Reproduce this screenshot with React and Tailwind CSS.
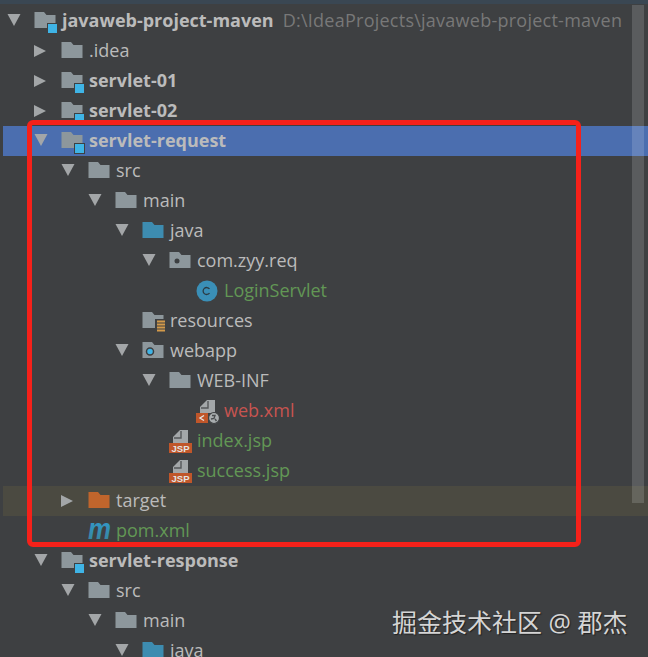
const indent = ['pl-[1px]', 'pl-[28px]', 'pl-[55px]', 'pl-[82px]', 'pl-[109px]', 'pl-[136px]', 'pl-[163px]']

const tones = {
  plain: 'text-[#bbbbbb]',
  green: 'text-[#629755]',
  red: 'text-[#c75450]',
}

const rows = [
  { depth: 0, arrow: 'down', icon: 'module', name: 'javaweb-project-maven', bold: true, hint: 'D:\\IdeaProjects\\javaweb-project-maven' },
  { depth: 1, arrow: 'right', icon: 'folder', name: '.idea' },
  { depth: 1, arrow: 'right', icon: 'module', name: 'servlet-01', bold: true },
  { depth: 1, arrow: 'right', icon: 'module', name: 'servlet-02', bold: true },
  { depth: 1, arrow: 'down', icon: 'module', name: 'servlet-request', bold: true, selected: true },
  { depth: 2, arrow: 'down', icon: 'folder', name: 'src' },
  { depth: 3, arrow: 'down', icon: 'folder', name: 'main' },
  { depth: 4, arrow: 'down', icon: 'source', name: 'java' },
  { depth: 5, arrow: 'down', icon: 'package', name: 'com.zyy.req' },
  { depth: 6, icon: 'class', name: 'LoginServlet', tone: 'green' },
  { depth: 4, icon: 'resources', name: 'resources' },
  { depth: 4, arrow: 'down', icon: 'web', name: 'webapp' },
  { depth: 5, arrow: 'down', icon: 'folder', name: 'WEB-INF' },
  { depth: 6, icon: 'xml', name: 'web.xml', tone: 'red' },
  { depth: 5, icon: 'jsp', name: 'index.jsp', tone: 'green' },
  { depth: 5, icon: 'jsp', name: 'success.jsp', tone: 'green' },
  { depth: 2, arrow: 'right', icon: 'target', name: 'target', excluded: true },
  { depth: 2, icon: 'maven', name: 'pom.xml', tone: 'green' },
  { depth: 1, arrow: 'down', icon: 'module', name: 'servlet-response', bold: true },
  { depth: 2, arrow: 'down', icon: 'folder', name: 'src' },
  { depth: 3, arrow: 'down', icon: 'folder', name: 'main' },
  { depth: 4, arrow: 'down', icon: 'source', name: 'java' },
]

function Arrow({ dir }) {
  return (
    <svg width="20" height="20" viewBox="0 0 20 20">
      {dir === 'down' ? <path d="M3.5 3h13L10 15z" fill="#a3a6a8" /> : <path d="M3 4l12 6-12 6z" fill="#a3a6a8" />}
    </svg>
  )
}

const folderPath = 'M0.5 2h9.5l2.5 3h9v13h-21z'

function Page() {
  return (
    <>
      <path d="M11 0h8v13H4V7z" fill="#a3a7a9" />
      <path d="M12 1v7H5" fill="none" stroke="#55585a" strokeWidth="1.4" />
    </>
  )
}

function Icon({ type }) {
  return (
    <svg width="24" height="22" viewBox="0 0 24 22" className="overflow-visible">
      {type === 'folder' && <path d={folderPath} fill="#8d979c" />}
      {type === 'source' && <path d={folderPath} fill="#3d8cb0" />}
      {type === 'target' && <path d={folderPath} fill="#c0652c" />}
      {type === 'module' && (
        <>
          <path d={folderPath} fill="#8d979c" />
          <rect x="13" y="13" width="11" height="11" fill="#3e4042" />
          <rect x="14" y="14" width="9" height="9" fill="#3fb4e6" />
        </>
      )}
      {type === 'package' && (
        <>
          <path d={folderPath} fill="#8d979c" />
          <circle cx="8" cy="11" r="2.5" fill="#3c3f41" />
        </>
      )}
      {type === 'web' && (
        <>
          <path d={folderPath} fill="#8d979c" />
          <circle cx="8" cy="11.5" r="3.5" fill="#3fb4e6" stroke="#3c3f41" strokeWidth="1.5" />
        </>
      )}
      {type === 'resources' && (
        <>
          <path d={folderPath} fill="#8d979c" />
          <rect x="13" y="9" width="11" height="15" fill="#3e4042" />
          <path d="M15 11.5h8M15 14.5h8M15 17.5h8M15 20.5h8" stroke="#d39a4a" strokeWidth="2" />
        </>
      )}
      {type === 'class' && (
        <>
          <circle cx="11" cy="11" r="10.5" fill="#3a8fb7" />
          <path d="M13.5 9a3.5 3.5 0 1 0 0 4" fill="none" stroke="#2b3a42" strokeWidth="1.3" />
        </>
      )}
      {type === 'jsp' && (
        <>
          <Page />
          <rect x="0" y="13" width="23" height="10" fill="#c0562a" />
          <text x="11.5" y="21.5" textAnchor="middle" fontSize="9.5" fontWeight="700" fill="#e4e4e4" className="font-['Liberation_Sans',sans-serif]">JSP</text>
        </>
      )}
      {type === 'xml' && (
        <>
          <Page />
          <rect x="0" y="13" width="12" height="10" fill="#c0562a" />
          <path d="M8 15.5l-4 2.5 4 2.5" fill="none" stroke="#e4e4e4" strokeWidth="1.4" />
          <circle cx="18" cy="18" r="5.5" fill="#a8acae" stroke="#3e4042" strokeWidth="1.2" />
          <path d="M16 15.5h3l-1 3-3 .5M19 19l1.5 2" fill="none" stroke="#4a4d4f" strokeWidth="1.4" />
        </>
      )}
      {type === 'maven' && (
        <>
          <defs>
            <linearGradient id="mavenFill" x1="0" y1="0" x2="0" y2="1">
              <stop offset="0" stopColor="#2f9fd8" />
              <stop offset="1" stopColor="#3a8296" />
            </linearGradient>
          </defs>
          <text x="0" y="19" fontSize="29" fontWeight="700" fontStyle="italic" fill="url(#mavenFill)" textLength="23" lengthAdjust="spacingAndGlyphs" className="font-['Liberation_Sans',sans-serif]">m</text>
        </>
      )}
    </svg>
  )
}

function Row({ row }) {
  const bg = row.selected ? 'bg-[#4b6eaf]' : row.excluded ? 'bg-[#4b4a41]' : ''
  return (
    <div className={`ml-[3px] flex h-[30px] items-center whitespace-nowrap ${indent[row.depth]} ${bg}`}>
      <div className="flex w-[30px] shrink-0 items-center">{row.arrow && <Arrow dir={row.arrow} />}</div>
      <div className="flex w-[28px] shrink-0 items-center"><Icon type={row.icon} /></div>
      <span className={`pb-[2px] ${tones[row.tone || 'plain']} ${row.bold ? 'font-bold' : ''}`}>{row.name}</span>
      {row.hint && <span className="ml-[9px] pb-[2px] tracking-[0.25px] text-[#787878]">{row.hint}</span>}
    </div>
  )
}

export default function App() {
  return (
    <div className="relative h-[657px] w-[648px] overflow-hidden bg-[#3e4042] font-['Open_Sans','Noto_Sans_CJK_SC',sans-serif] text-[18px] leading-[30px]">
      <div className="h-[4px] bg-[#3a4753]" />
      <div className="mt-[2px] h-[651px] overflow-hidden">
        {rows.map((row, i) => <Row key={i} row={row} />)}
      </div>
      {/* scrollbar */}
      <div className="absolute right-[4px] top-[5px] h-[498px] w-[12px] bg-white/15" />
      {/* red annotation box */}
      <div className="absolute left-[27px] top-[120px] h-[427px] w-[554px] rounded-[6px] border-[5px] border-[#f5211a]" />
      <div className="absolute left-[392px] top-[604px] text-[25px] leading-[36px] text-[#d5d5d5] [text-shadow:1px_1px_1px_#222]">掘金技术社区 @ 郡杰</div>
    </div>
  )
}
